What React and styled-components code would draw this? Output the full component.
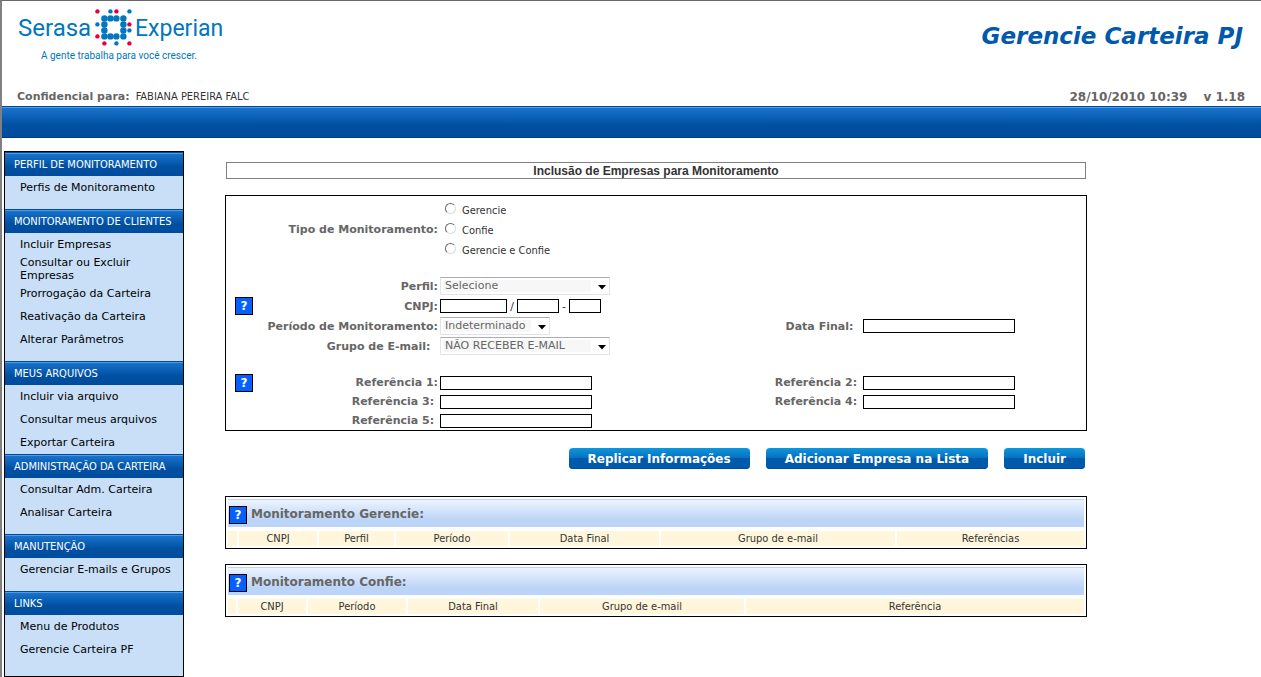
/* eslint-disable react/prop-types */
import styled, { createGlobalStyle, css } from "styled-components";

const verdana = `Verdana, "DejaVu Sans", sans-serif`;
const tahoma = `Tahoma, "DejaVu Sans Condensed", "DejaVu Sans", sans-serif`;

const GlobalStyle = createGlobalStyle`
  * {
    box-sizing: border-box;
  }

  body {
    margin: 0;
    background: #fff;
    color: #333;
    font-family: ${verdana};
    font-size: 11px;
    line-height: 13px;
  }
`;

const barGradient = css`
  border-top: 1px solid #004a99;
  background: linear-gradient(#1a75cf, #0050a2 60%, #004c9e);
  box-shadow: inset 0 1px #4f9be6;
`;

const Page = styled.div`
  border-top: 1px solid #696969;
  border-left: 2px solid #808080;
`;

const Header = styled.header`
  display: flex;
  justify-content: space-between;
  height: 105px;
  padding: 0 16px 2px 15px;
`;

const HeaderSide = styled.div`
  display: flex;
  flex-direction: column;
  justify-content: space-between;
  align-items: ${({ $end }) => ($end ? "flex-end" : "flex-start")};
`;

const Logo = styled.svg`
  display: block;
  width: 212px;
  height: 64px;
  fill: #0077bf;
  font-family: Roboto, "Liberation Sans", sans-serif;
`;

const AppName = styled.h1`
  margin: 21px 2px 0 0;
  color: #0059ab;
  font-size: 23px;
  font-style: italic;
  line-height: 28px;
`;

const HeaderInfo = styled.p`
  display: flex;
  gap: ${({ $gap }) => $gap}px;
  margin: 0;
  font-size: ${({ $size = 11 }) => $size}px;
  line-height: 14px;
`;

const Strong = styled.strong`
  color: #666;
`;

const UserName = styled.span`
  font-family: ${tahoma};
`;

const TopBar = styled.div`
  ${barGradient}
  height: 32px;
  border-bottom: 1px solid #003a7c;
`;

const Body = styled.div`
  display: flex;
  align-items: flex-start;
  gap: 41px;
  padding: 13px 16px 0 2px;
`;

const Sidebar = styled.nav`
  flex: none;
  width: 180px;
  padding-bottom: 5px;
  border: 1px solid #000;
  background: #c8dff7;
`;

const MenuTitle = styled.h2`
  ${barGradient}
  margin: 0;
  padding: 5px 9px 4px;
  color: #fff;
  font-family: ${tahoma};
  font-size: 11px;
  font-weight: normal;
  line-height: 14px;
  white-space: nowrap;
`;

const MenuList = styled.ul`
  margin: 0;
  padding: 0 0 ${({ $tight }) => ($tight ? 0 : 10)}px 15px;
  list-style: none;
`;

const MenuItem = styled.li`
  display: flex;
  align-items: center;
  min-height: 23px;
`;

const MenuLink = styled.a`
  max-width: 160px;
  color: #000;
  text-decoration: none;
`;

const Main = styled.main`
  flex: 1;
  max-width: 862px;
  padding-top: 11px;
`;

const PageTitle = styled.h2`
  margin: 0 1px 16px;
  padding-top: 1px;
  border: 1px solid #808080;
  color: #333;
  font-family: "Liberation Sans", Arial, sans-serif;
  font-size: 12px;
  line-height: 14px;
  text-align: center;
`;

const Panel = styled.div`
  display: flex;
  flex-direction: column;
  gap: 17px;
  padding: 3px 71px 0 9px;
  border: 1px solid #000;
`;

const Rows = styled.div`
  display: grid;
  grid-template-columns: 18px 183px 1fr auto 152px;
  grid-auto-rows: ${({ $height }) => $height}px;
  align-items: center;
  column-gap: 2px;
`;

const RadioRows = styled.div`
  display: grid;
  grid-template-columns: 203px 1fr;
  align-items: center;
  column-gap: 2px;
`;

const Label = styled.label`
  grid-column: ${({ $second }) => ($second ? 4 : 2)};
  color: #666;
  font-weight: bold;
  text-align: right;
  white-space: pre;
`;

const GroupLabel = styled.span`
  color: #666;
  font-weight: bold;
  text-align: right;
`;

const RadioLabel = styled.label`
  display: flex;
  gap: 6px;
  height: 20px;
  padding: 4px 5px 0;
  font-family: ${tahoma};
  line-height: 16px;
`;

const Radio = styled.input`
  appearance: none;
  width: 11px;
  height: 11px;
  margin: 0;
  border: 1px solid;
  border-color: #6a6a6a #dcdcdc #dcdcdc #6a6a6a;
  border-radius: 50%;

  &:checked {
    background: radial-gradient(#000 2px, transparent 3px);
  }
`;

const TextInput = styled.input`
  width: ${({ $width = 152 }) => $width}px;
  height: 14px;
  padding: 0 2px;
  border: 1px solid #000;
  background: #fff;
  font-family: ${verdana};
  font-size: 10px;
`;

const CnpjFields = styled.div`
  display: flex;
  align-items: center;
`;

const Separator = styled.span`
  width: 10px;
  text-align: center;
`;

const SelectBox = styled.div`
  position: relative;
  width: ${({ $width }) => $width}px;
  height: 18px;
`;

const Select = styled.select`
  appearance: none;
  display: block;
  width: 100%;
  height: 18px;
  padding: 0 18px 0 4px;
  border: 1px solid #e2e3ea;
  border-top-color: #abadb3;
  border-radius: 1px;
  background: linear-gradient(#f7f7f7, #f7f7f7) 2px 2px / calc(100% - 20px) 12px
    no-repeat #fff;
  color: #666;
  font-family: ${verdana};
  font-size: 11px;
  line-height: 16px;
`;

const Arrow = styled.svg`
  position: absolute;
  top: 8px;
  right: 4px;
  width: 8px;
  height: 5px;
  pointer-events: none;
`;

const HelpButton = styled.button`
  grid-column: 1;
  width: 18px;
  height: 18px;
  padding: 1px 0 0;
  border: 1px solid #000;
  background: #0560ff;
  color: #fff;
  font-family: ${verdana};
  font-size: 12px;
  font-weight: bold;
  line-height: 15px;
`;

const Actions = styled.div`
  display: flex;
  justify-content: flex-end;
  gap: 16px;
  padding: 17px 2px 27px 0;
`;

const ActionButton = styled.button`
  height: 21px;
  padding: 2px 19px 0;
  border: 0;
  border-radius: 4px;
  background: linear-gradient(#0b98dd, #0c6cbd 50%, #005aab 50%, #0059ab);
  box-shadow: inset 0 -1px #004f9c;
  color: #fff;
  font-family: ${verdana};
  font-size: 12px;
  font-weight: bold;
  line-height: 19px;
  white-space: nowrap;
`;

const ListPanel = styled.section`
  margin-bottom: 15px;
  padding: 2px 2px 0;
  border: 1px solid #000;
`;

const ListTitle = styled.div`
  display: flex;
  align-items: center;
  gap: 4px;
  height: 28px;
  margin-bottom: 2px;
  padding: 2px 1px 0;
  border-top: 1px solid #bcd4f7;
  background: linear-gradient(#edf4fe, #bbd4f7 75%);
`;

const ListName = styled.h3`
  margin: 0;
  padding-bottom: 2px;
  color: #666;
  font-size: 12px;
  line-height: 16px;
`;

const ListTable = styled.table`
  table-layout: fixed;
  width: calc(100% + 4px);
  margin: 0 -2px;
  border-spacing: 2px;
`;

const Column = styled.col`
  width: ${({ $width }) => ($width ? `${$width}px` : "auto")};
`;

const ColumnTitle = styled.th`
  height: 15px;
  padding: 1px 0 0;
  background: #fff6db;
  font-family: ${tahoma};
  font-size: 11px;
  font-weight: normal;
  line-height: 14px;
`;

const menu = [
  { title: "PERFIL DE MONITORAMENTO", items: ["Perfis de Monitoramento"] },
  {
    title: "MONITORAMENTO DE CLIENTES",
    items: [
      "Incluir Empresas",
      "Consultar ou Excluir Empresas",
      "Prorrogação da Carteira",
      "Reativação da Carteira",
      "Alterar Parâmetros",
    ],
  },
  {
    title: "MEUS ARQUIVOS",
    tight: true,
    items: ["Incluir via arquivo", "Consultar meus arquivos", "Exportar Carteira"],
  },
  {
    title: "ADMINISTRAÇÃO DA CARTEIRA",
    items: ["Consultar Adm. Carteira", "Analisar Carteira"],
  },
  { title: "MANUTENÇÃO", items: ["Gerenciar E-mails e Grupos"] },
  { title: "LINKS", items: ["Menu de Produtos", "Gerencie Carteira PF"] },
];

const gerencieColumns = [
  { width: 9 },
  { title: "CNPJ", width: 78 },
  { title: "Perfil", width: 75 },
  { title: "Período", width: 112 },
  { title: "Data Final", width: 149 },
  { title: "Grupo de e-mail", width: 234 },
  { title: "Referências" },
];

const confieColumns = [
  { width: 8 },
  { title: "CNPJ", width: 68 },
  { title: "Período", width: 98 },
  { title: "Data Final", width: 130 },
  { title: "Grupo de e-mail", width: 204 },
  { title: "Referência" },
];

// [x, y, radius, red]
const logoDots = [
  [80, 10, 2, true],
  [93, 10, 2],
  [99, 10, 2, true],
  [112, 10, 2],
  [87, 17, 3],
  [93, 17, 3],
  [99, 17, 3],
  [106, 17, 3],
  [80, 23, 2],
  [87, 23, 3],
  [106, 23, 3],
  [112, 23, 2, true],
  [87, 29, 3],
  [106, 29, 3],
  [112, 29, 2],
  [80, 35, 2, true],
  [87, 35, 3],
  [93, 35, 3],
  [99, 35, 3],
  [106, 35, 3],
  [87, 42, 2, true],
  [99, 42, 2],
  [112, 42, 2, true],
];

function SerasaLogo() {
  return (
    <Logo viewBox="0 0 212 64" role="img" aria-label="Serasa Experian">
      <text x="1" y="35" fontSize="24">
        Serasa
      </text>
      {logoDots.map(([x, y, r, red]) => (
        <circle
          key={`${x}-${y}`}
          cx={x + 0.4}
          cy={y + 0.4}
          r={r + 0.2}
          fill={red ? "#e5003d" : undefined}
        />
      ))}
      <text x="118" y="35" fontSize="23">
        Experian
      </text>
      <text x="24" y="58" fontSize="10">
        A gente trabalha para você crescer.
      </text>
    </Logo>
  );
}

function Help({ subject }) {
  return (
    <HelpButton type="button" aria-label={`Ajuda: ${subject}`}>
      ?
    </HelpButton>
  );
}

function SelectField({ id, width, value }) {
  return (
    <SelectBox $width={width}>
      <Select id={id}>
        <option>{value}</option>
      </Select>
      <Arrow viewBox="0 0 8 5" aria-hidden="true">
        <path d="M0 0h8L4 4.5z" />
      </Arrow>
    </SelectBox>
  );
}

function CompanyForm() {
  return (
    <Panel>
      <RadioRows role="radiogroup" aria-labelledby="tipo">
        <GroupLabel id="tipo">Tipo de Monitoramento:</GroupLabel>
        <div>
          {["Gerencie", "Confie", "Gerencie e Confie"].map((tipo) => (
            <RadioLabel key={tipo}>
              <Radio type="radio" name="tipo" value={tipo} />
              {tipo}
            </RadioLabel>
          ))}
        </div>
      </RadioRows>

      <Rows $height={20}>
        <Label htmlFor="perfil">Perfil:</Label>
        <SelectField id="perfil" width={170} value="Selecione" />

        <Help subject="CNPJ" />
        <Label htmlFor="cnpj">CNPJ:</Label>
        <CnpjFields>
          <TextInput id="cnpj" $width={67} />
          <Separator>/</Separator>
          <TextInput aria-label="CNPJ filial" $width={42} />
          <Separator>-</Separator>
          <TextInput aria-label="CNPJ dígito" $width={32} />
        </CnpjFields>

        <Label htmlFor="periodo">Período de Monitoramento:</Label>
        <SelectField id="periodo" width={110} value="Indeterminado" />
        <Label htmlFor="data" $second>
          {"Data Final:  "}
        </Label>
        <TextInput id="data" />

        <Label htmlFor="grupo">{"Grupo de E-mail:  "}</Label>
        <SelectField id="grupo" width={170} value="NÃO RECEBER E-MAIL" />
      </Rows>

      <Rows $height={19}>
        <Help subject="Referências" />
        <Label htmlFor="ref1">Referência 1:</Label>
        <TextInput id="ref1" />
        <Label htmlFor="ref2" $second>
          {"Referência 2: "}
        </Label>
        <TextInput id="ref2" />

        <Label htmlFor="ref3">{"Referência 3: "}</Label>
        <TextInput id="ref3" />
        <Label htmlFor="ref4" $second>
          {"Referência 4: "}
        </Label>
        <TextInput id="ref4" />

        <Label htmlFor="ref5">{"Referência 5: "}</Label>
        <TextInput id="ref5" />
      </Rows>
    </Panel>
  );
}

function MonitoringList({ name, columns }) {
  return (
    <ListPanel>
      <ListTitle>
        <Help subject={name} />
        <ListName>{name}:</ListName>
      </ListTitle>
      <ListTable>
        <colgroup>
          {columns.map(({ title = "", width }) => (
            <Column key={title} $width={width} />
          ))}
        </colgroup>
        <thead>
          <tr>
            {columns.map(({ title = "" }) => (
              <ColumnTitle key={title}>{title}</ColumnTitle>
            ))}
          </tr>
        </thead>
      </ListTable>
    </ListPanel>
  );
}

function App() {
  return (
    <Page>
      <GlobalStyle />
      <Header>
        <HeaderSide>
          <SerasaLogo />
          <HeaderInfo $gap={6}>
            <Strong>Confidencial para:</Strong>
            <UserName>FABIANA PEREIRA FALC</UserName>
          </HeaderInfo>
        </HeaderSide>
        <HeaderSide $end>
          <AppName>Gerencie Carteira PJ</AppName>
          <HeaderInfo $gap={16} $size={12}>
            <Strong>28/10/2010 10:39</Strong>
            <Strong>v 1.18</Strong>
          </HeaderInfo>
        </HeaderSide>
      </Header>
      <TopBar />

      <Body>
        <Sidebar>
          {menu.map(({ title, items, tight }) => (
            <div key={title}>
              <MenuTitle>{title}</MenuTitle>
              <MenuList $tight={tight}>
                {items.map((item) => (
                  <MenuItem key={item}>
                    <MenuLink href="#">{item}</MenuLink>
                  </MenuItem>
                ))}
              </MenuList>
            </div>
          ))}
        </Sidebar>

        <Main>
          <PageTitle>Inclusão de Empresas para Monitoramento</PageTitle>
          <CompanyForm />
          <Actions>
            <ActionButton type="button">Replicar Informações</ActionButton>
            <ActionButton type="button">Adicionar Empresa na Lista</ActionButton>
            <ActionButton type="button">Incluir</ActionButton>
          </Actions>
          <MonitoringList
            name="Monitoramento Gerencie"
            columns={gerencieColumns}
          />
          <MonitoringList name="Monitoramento Confie" columns={confieColumns} />
        </Main>
      </Body>
    </Page>
  );
}

export default App;
